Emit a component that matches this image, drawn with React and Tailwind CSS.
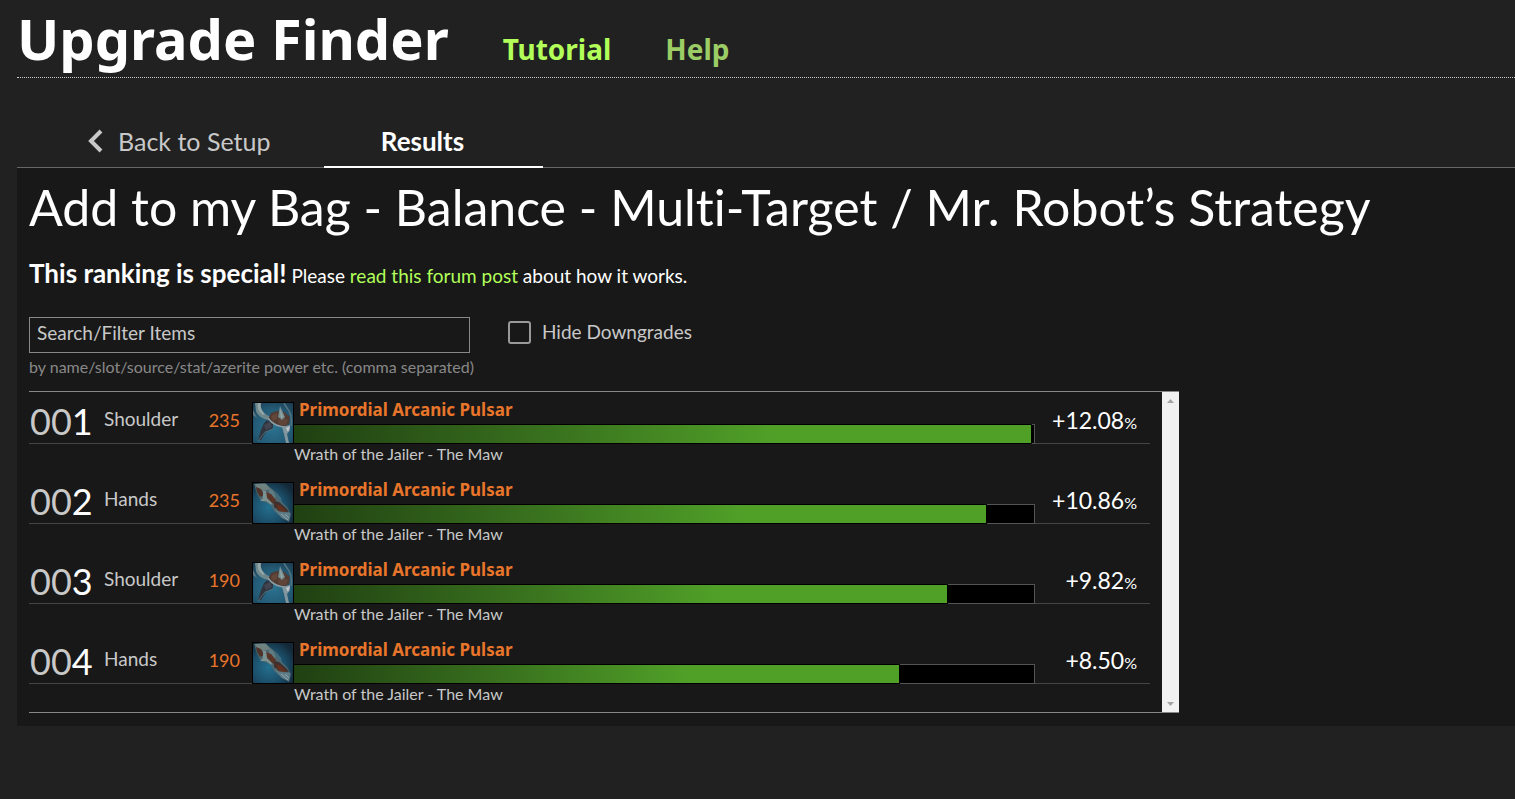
const items = [
  { rank: 1, slot: 'Shoulder', level: 235, icon: 'shoulder', gain: '12.08', bar: 99.6 },
  { rank: 2, slot: 'Hands', level: 235, icon: 'hands', gain: '10.86', bar: 93.5 },
  { rank: 3, slot: 'Shoulder', level: 190, icon: 'shoulder', gain: '9.82', bar: 88.3 },
  { rank: 4, slot: 'Hands', level: 190, icon: 'hands', gain: '8.50', bar: 81.8 },
];

const ShoulderIcon = () => (
  <svg viewBox="0 0 40 40" className="block h-10 w-10">
    <defs>
      <radialGradient id="shoulder-bg" cx="0.5" cy="0.6" r="0.75">
        <stop offset="0" stopColor="#2b7391" />
        <stop offset="0.6" stopColor="#245b76" />
        <stop offset="1" stopColor="#1b3d52" />
      </radialGradient>
    </defs>
    <rect width="40" height="40" fill="url(#shoulder-bg)" />
    <path d="M2 0L8 0C6 5 9 10 14 12L19 15L16 17C9 16 4 12 3 8Z" fill="#6f888d" />
    <path d="M5 0L8 0C7 4 9 8 12 11L10 12C6 9 4 5 5 0Z" fill="#94a6a6" />
    <path d="M0 7L4 15L0 12Z" fill="#5f7a82" />
    <path d="M15 16L18 10L24 8L31 9L37 14L36 21L31 24L22 21Z" fill="#513a32" />
    <path d="M18 13L24 10L24 16L20 18Z" fill="#63473b" />
    <path d="M24 17L31 15L35 17L33 22L27 22Z" fill="#5f4439" />
    <path d="M25 14L27 3L32 14L29 17Z" fill="#768b8e" />
    <path d="M27 6L30 14L28 15Z" fill="#9dacac" />
    <path d="M14 17L20 20L20 25L13 29L8 37L5 37L8 27L11 20Z" fill="#2f353f" />
    <path d="M11 22L17 19L19 24L13 27Z" fill="#424550" />
    <path d="M15 15C19 21 25 24 34 24" fill="none" stroke="#879ba1" strokeWidth="1.5" />
    <path d="M20 26L12 29L5 38" fill="none" stroke="#4d6874" strokeWidth="1" />
    <path d="M29 24L37 22L37 27L34 31L36 40L33 40L31 31Z" fill="#8296a0" />
    <path d="M33 25L37 23L35 29Z" fill="#c2c7cc" />
    <path d="M38 23C39 17 39 13 36 8L32 2L31 0" fill="none" stroke="#54747f" strokeWidth="1.5" />
  </svg>
);

const HandsIcon = () => (
  <svg viewBox="0 0 40 40" className="block h-10 w-10">
    <defs>
      <radialGradient id="hands-bg" cx="0.4" cy="0.6" r="0.7">
        <stop offset="0" stopColor="#23708f" />
        <stop offset="0.6" stopColor="#1b4d68" />
        <stop offset="1" stopColor="#132938" />
      </radialGradient>
    </defs>
    <rect width="40" height="40" fill="url(#hands-bg)" />
    <path d="M1 1L12 0L18 5L25 11L28 18L34 24L38 31L36 39L29 35L21 28L17 21L8 18L4 11Z" fill="#4c6770" />
    <path d="M2 1L13 1L17 6L10 8L4 5Z" fill="#70827f" />
    <path d="M3 4L8 6L11 12L7 14L4 9Z" fill="#4d3328" />
    <path d="M16 5L20 8L23 13L21 16L16 11Z" fill="#607d83" />
    <path d="M13 9L18 11L23 17L21 21L14 16Z" fill="#5a3427" />
    <path d="M10 8L13 8L14 15L19 20L18 22L13 18L7 18L10 15Z" fill="#7b9293" />
    <path d="M21 18L26 19L33 25L36 29L27 28L21 24Z" fill="#3f302f" />
    <path d="M23 21L28 23L34 29L25 28Z" fill="#62301f" />
    <path d="M21 26L27 29L37 30L36 38L29 35Z" fill="#5e7c87" />
    <path d="M28 31L35 37M32 31L36 35" fill="none" stroke="#8da4aa" strokeWidth="1" />
    <path d="M22 11L27 15L28 19" fill="none" stroke="#3f6c7d" strokeWidth="2" />
  </svg>
);

const ResultRow = ({ item }) => (
  <tr className="h-20 align-top">
    <td className="pt-[10px]">
      <div className="h-[42px] border-b border-[#444] pl-px text-4xl leading-[38px] text-[#c8c8c8]">
        00<span className="text-white">{item.rank}</span>
      </div>
    </td>
    <td className="pt-[10px]">
      <div className="h-[42px] border-b border-[#444] text-[19px] leading-[34px] text-[#c8c8c8]">{item.slot}</div>
    </td>
    <td className="pt-[10px]">
      <div className="h-[42px] border-b border-[#444] pr-3 text-right text-lg leading-9 text-[#e8752a]">
        {item.level}
      </div>
    </td>
    <td className="pt-[10px]">
      <div className="flex">
        <div className="shrink-0 border border-black">
          {item.icon === 'shoulder' ? <ShoulderIcon /> : <HandsIcon />}
        </div>
        <div className="flex-1">
          <div className="h-[22px] pl-[5px] font-['Noto_Sans',sans-serif] text-[17px] leading-4 font-bold text-[#e8752a]">
            Primordial Arcanic Pulsar
          </div>
          <div className="h-5 bg-black shadow-[inset_0_0_0_1px_#555]">
            <div
              className="h-5 border-y border-r border-black bg-linear-to-r from-[#204012] to-[#50a028] to-65%"
              style={{ width: `${item.bar}%` }}
            />
          </div>
        </div>
      </div>
      <div className="pl-[42px] text-base leading-5 text-[#c8c8c8]">Wrath of the Jailer - The Maw</div>
    </td>
    <td className="pt-[10px]">
      <div className="h-[42px] border-b border-[#444] pr-[13px] text-right text-[23px] leading-9 text-white">
        +{item.gain}
        <span className="text-base">%</span>
      </div>
    </td>
  </tr>
);

const ScrollBar = () => (
  <div className="flex w-[17px] shrink-0 flex-col justify-between bg-[#f1f1f1]">
    <button type="button" aria-label="Scroll up" className="flex h-[17px] items-center justify-center">
      <svg viewBox="0 0 7 4" className="h-1 w-[7px]">
        <path d="M0 4L3.5 0L7 4Z" fill="#a3a3a3" />
      </svg>
    </button>
    <button type="button" aria-label="Scroll down" className="flex h-[17px] items-center justify-center">
      <svg viewBox="0 0 7 4" className="h-1 w-[7px]">
        <path d="M0 0L3.5 4L7 0Z" fill="#a3a3a3" />
      </svg>
    </button>
  </div>
);

const App = () => {
  return (
    <div className="min-h-screen bg-[#212121] pl-[17px] font-['Lato',sans-serif] text-white [font-variant-ligatures:none]">
      <header className="flex h-[78px] items-baseline gap-[54px] border-b border-dotted border-[#ccc] font-['Noto_Sans',sans-serif] font-bold">
        <h1 className="text-[56px] leading-[76px]">Upgrade Finder</h1>
        <a href="#tutorial" className="text-[28px] text-[#b2ff59]">Tutorial</a>
        <a href="#help" className="text-[28px] text-[#9ccc65]">Help</a>
      </header>

      <nav className="mt-[38px] flex h-[52px] border-b border-[#666]">
        <button type="button" className="flex w-[307px] items-center pl-[70px] text-[25px] text-[#c8c8c8]">
          <svg viewBox="0 0 16 26" className="h-[26px] w-4" fill="none" stroke="currentColor" strokeWidth="4">
            <path d="M14 2L4 12L14 22" />
          </svg>
          <span className="pl-[15px]">Back to Setup</span>
        </button>
        <button type="button" className="-mb-px w-[219px] border-b-2 border-white pr-[22px] text-[26px] font-bold">
          Results
        </button>
      </nav>

      <main className="bg-[#181818] px-3 pb-[13px]">
        <h2 className="pt-[6px] text-[50px] leading-[66px]">Add to my Bag - Balance - Multi-Target / Mr. Robot’s Strategy</h2>
        <p className="pt-[17px] text-[19px] leading-8">
          <strong className="text-[26px] leading-8 font-bold">This ranking is special!</strong> Please{' '}
          <a href="#forum" className="text-[#b2ff59]">read this forum post</a> about how it works.
        </p>

        <div className="mt-[25px] flex items-start gap-[38px]">
          <div className="w-[441px]">
            <input
              type="text"
              aria-label="Search/Filter Items"
              placeholder="Search/Filter Items"
              className="block h-9 w-full border border-[#888] px-[7px] pb-[5px] text-[19px] placeholder:text-[#c8c8c8]"
            />
            <p className="pt-1 text-base leading-5 whitespace-nowrap text-[#888]">
              by name/slot/source/stat/azerite power etc. (comma separated)
            </p>
          </div>
          <label className="flex h-[30px] items-center gap-[11px] text-[19px] text-[#c8c8c8]">
            <input type="checkbox" className="h-[23px] w-[23px] appearance-none rounded-[3px] border-2 border-[#999]" />
            Hide Downgrades
          </label>
        </div>

        <section className="mt-[14px] flex max-w-[1150px] border-y border-[#888]">
          <div className="flex-1 pr-3">
            <table className="w-full table-fixed">
              <colgroup>
                <col className="w-[75px]" />
                <col className="w-24" />
                <col className="w-[52px]" />
                <col />
                <col className="w-[115px]" />
              </colgroup>
              <tbody>
                {items.map((item) => (
                  <ResultRow key={item.rank} item={item} />
                ))}
              </tbody>
            </table>
          </div>
          <ScrollBar />
        </section>
      </main>
    </div>
  );
};

export default App;
